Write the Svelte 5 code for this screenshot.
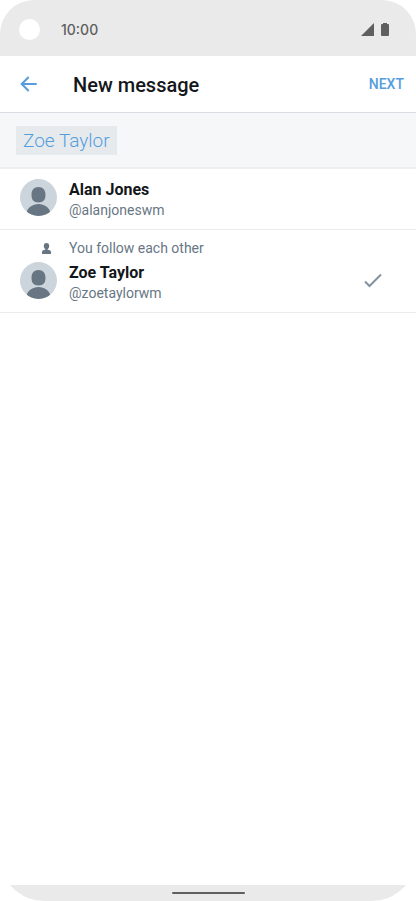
<script lang="ts">
  type Person = { name: string; handle: string; mutual: boolean };

  const people: Person[] = [
    { name: "Alan Jones", handle: "alanjoneswm", mutual: false },
    { name: "Zoe Taylor", handle: "zoetaylorwm", mutual: true },
  ];

  let selected = $state(["zoetaylorwm"]);
  let recipients = $derived(people.filter((p) => selected.includes(p.handle)));

  function toggle(handle: string) {
    selected = selected.includes(handle)
      ? selected.filter((h) => h !== handle)
      : [...selected, handle];
  }
</script>

<div class="phone">
  <div class="status">
    <span class="camera"></span>
    <time>10:00</time>
    <svg class="signal" width="13" height="13" viewBox="0 0 13 13" aria-hidden="true">
      <path d="M13 0v13H0z" />
    </svg>
    <svg width="8" height="13" viewBox="0 0 8 13" aria-hidden="true">
      <path d="M2 0h4v1h1a1 1 0 0 1 1 1v10a1 1 0 0 1-1 1H1a1 1 0 0 1-1-1V2a1 1 0 0 1 1-1h1z" />
    </svg>
  </div>

  <header>
    <button class="back" aria-label="Back">
      <svg width="18" height="18" viewBox="0 0 18 18" aria-hidden="true">
        <path d="M8.700 2 1.700 9l7 7M1.700 9h15" />
      </svg>
    </button>
    <h1>New message</h1>
    <button class="next">NEXT</button>
  </header>

  <div class="recipients">
    {#each recipients as person (person.handle)}
      <button class="chip" onclick={() => toggle(person.handle)}>{person.name}</button>
    {/each}
    <input type="text" aria-label="Add people" />
  </div>

  <ul>
    {#each people as person (person.handle)}
      <li>
        <button
          class="person"
          aria-pressed={selected.includes(person.handle)}
          onclick={() => toggle(person.handle)}
        >
          {#if person.mutual}
            <span class="mutual">
              <svg width="9" height="11" viewBox="0 0 9 11" aria-hidden="true">
                <path d="M4.500 0c1.900 0 2.700 1.100 2.700 2.900 0 1.500-.6 2.500-1.500 3v.8C8 7 9 7.800 9 9.300V11H0V9.300C0 7.800 1 7 3.300 6.700v-.8c-.9-.5-1.500-1.500-1.500-3C1.800 1.100 2.600 0 4.500 0z" />
              </svg>
              <span>You follow each other</span>
            </span>
          {/if}
          <span class="row">
            <svg class="avatar" width="37" height="37" viewBox="0 0 37 37" aria-hidden="true">
              <clipPath id="clip-{person.handle}"><circle cx="18.500" cy="18.500" r="18.500" /></clipPath>
              <g clip-path="url(#clip-{person.handle})">
                <path class="disc" d="M0 0h37v37H0z" />
                <path d="M18.500 8c4.500 0 7 3 7 7.800 0 5-2 7.700-7 7.700s-7-2.700-7-7.700C11.500 11 14 8 18.500 8zM6.500 34c1-5.500 6-9 12-9s11 3.500 12 9v3h-24z" />
              </g>
            </svg>
            <span class="text">
              <strong>{person.name}</strong>
              <span>@{person.handle}</span>
            </span>
            {#if selected.includes(person.handle)}
              <svg class="check" width="18" height="37" viewBox="0 0 18 15" aria-hidden="true">
                <path d="m1 8.500 4.500 4.500L17 1.500" />
              </svg>
            {/if}
          </span>
        </button>
      </li>
    {/each}
  </ul>

  <div class="nav"><span></span></div>
</div>

<style>
  :global(body) {
    margin: 0;
    background: #fff;
  }
  .phone {
    display: flex;
    flex-direction: column;
    min-height: 100vh;
    overflow: hidden;
    border-radius: 34px 34px 44px 44px;
    background: #fff;
    color: #14171a;
    font-family: Roboto, "Noto Sans", sans-serif;
  }
  button {
    border: 0;
    padding: 0;
    background: none;
    color: inherit;
    font: inherit;
    cursor: pointer;
  }
  svg {
    display: block;
    flex: none;
  }
  .status {
    display: flex;
    align-items: center;
    box-sizing: border-box;
    height: 56px;
    padding: 2px 27px 0 19px;
    background: #eaeaea;
    color: #5f5f5f;
    fill: #5f5f5f;
  }
  .camera {
    width: 21px;
    height: 21px;
    margin-right: 21px;
    border-radius: 50%;
    background: #fff;
  }
  time {
    font-family: Inter, Roboto, sans-serif;
    font-size: 14px;
    font-weight: 500;
  }
  .signal {
    margin: 0 7px 0 auto;
  }
  header {
    display: flex;
    align-items: center;
    height: 56px;
    padding: 0 12px 0 20px;
    border-bottom: 1px solid #d8dce3;
  }
  .back path {
    fill: none;
    stroke: #559ddd;
    stroke-width: 2;
  }
  h1 {
    flex: 1;
    margin: 0 0 0 35px;
    padding-top: 2px;
    font-size: 20px;
    font-weight: 500;
    line-height: 24px;
  }
  .next {
    color: #559ddd;
    font-size: 14px;
    font-weight: 500;
  }
  .recipients {
    display: flex;
    align-items: center;
    gap: 8px;
    height: 54px;
    padding: 0 16px;
    border-bottom: 2px solid #eceef0;
    background: #f5f7f9;
  }
  .chip {
    flex: none;
    padding: 0 7px;
    background: #e6eaed;
    color: #559ddd;
    font-size: 19px;
    font-weight: 300;
    line-height: 29px;
  }
  input {
    flex: 1;
    min-width: 0;
    border: 0;
    outline: 0;
    background: none;
    font: inherit;
  }
  ul {
    flex: 1;
    margin: 0;
    padding: 0;
    list-style: none;
  }
  li {
    border-bottom: 1px solid #e9ebed;
  }
  .person {
    display: block;
    width: 100%;
    padding: 10px 34px 8px 20px;
    color: #687684;
    font-size: 14px;
    text-align: left;
  }
  .mutual {
    display: flex;
    align-items: center;
    gap: 18px;
    margin-bottom: 6px;
    padding-left: 22px;
    line-height: 16px;
    fill: #687684;
  }
  .row {
    display: flex;
    align-items: flex-start;
    gap: 12px;
  }
  .avatar {
    fill: #687684;
  }
  .disc {
    fill: #cdd5dc;
  }
  .text {
    display: flex;
    flex: 1;
    flex-direction: column;
    line-height: 21px;
  }
  strong {
    color: #14171a;
    font-size: 16px;
    font-weight: 700;
  }
  .check path {
    fill: none;
    stroke: #8492a0;
    stroke-width: 2;
  }
  .nav {
    display: flex;
    align-items: center;
    justify-content: center;
    height: 16px;
    background: #eaeaea;
  }
  .nav span {
    width: 73px;
    height: 2px;
    border-radius: 1px;
    background: #5f5f5f;
  }
</style>
